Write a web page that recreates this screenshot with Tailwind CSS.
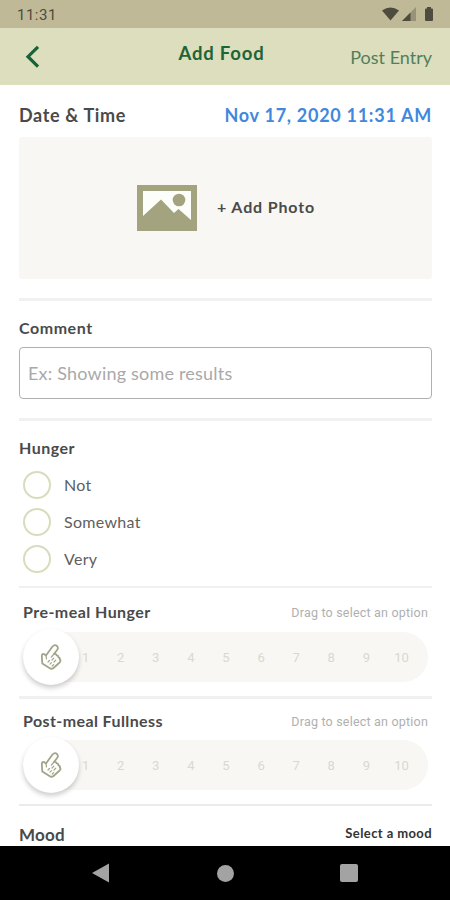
<!DOCTYPE html>
<html lang="en">
<head>
<meta charset="utf-8">
<meta name="viewport" content="width=device-width, initial-scale=1">
<title>Add Food</title>
<script src="https://cdn.jsdelivr.net/npm/@tailwindcss/browser@4"></script>
</head>
<body class="bg-white">
<svg class="hidden">
  <symbol id="hand" viewBox="0 0 24 28">
    <g fill="none" stroke="#a2a487" stroke-width="1.800" stroke-linejoin="round" stroke-linecap="round">
      <path d="M3.300 20.500 L2.800 13 Q3 10.500 5 11 L7 12.500 L13.500 3.500 Q15.800 1 18 3 Q19.600 4.800 18.300 6.800 L15 11 Q17 10.300 17.600 12.300 Q19.500 12.300 19.400 14.300 Q21.300 14.800 20.800 16.500 Q22.300 18 20.600 19.500 L14.500 25 Q12.500 26.500 10.500 25 Z"/>
      <path stroke-width="1.200" d="M7 12.500 L7.500 16 M15 11 L12.300 14.200 M9 19 L10.500 17.500 M13 17 L14.800 15.200 M11 21.200 L12.500 19.700 M15 19 L16.800 17.200 M13.200 23 L14.600 21.600"/>
    </g>
  </symbol>
</svg>
<div class="flex h-[900px] w-[450px] flex-col overflow-hidden bg-white font-['Lato',sans-serif] text-[#4a4a4a]">
  <div class="flex h-7 shrink-0 items-center justify-between bg-[#bfb997] pr-4 pl-[17px] text-[#4e4c3e]">
    <span class="pt-[2px] font-[Roboto,sans-serif] text-[15px] leading-5 tracking-[0.5px]">11:31</span>
    <svg class="mt-px h-4 w-[52px]" viewBox="0 0 52 16" fill="#4e4c3e">
      <path d="M0 3.500 Q8.500 -2.500 17 3.500 L8.500 13.500Z"/>
      <path d="M20 14 L34 0 V14Z" fill-opacity=".35"/><path d="M20 14 L28.500 5.500 V14Z"/>
      <path d="M45 0 h4 v1.500 h1 q1 0 1 1 V13 q0 1-1 1 h-6 q-1 0-1-1 V2.500 q0-1 1-1 h1Z"/>
    </svg>
  </div>
  <header class="grid h-[57px] shrink-0 grid-cols-3 bg-[#dcdebe] pr-[18px] pl-[25px] text-[#1d6437]">
    <svg class="mt-[17px] h-6 w-4" viewBox="0 0 16 24" fill="none" stroke="#176335" stroke-width="3.200"><path d="M13 1.800 L3 11.700 L13 21.700"/></svg>
    <h1 class="pt-[13px] pr-[14px] text-center text-[18.5px] leading-6 font-bold tracking-[0.800px] whitespace-nowrap">Add Food</h1>
    <span class="pt-[17px] text-right text-[18px] leading-6 whitespace-nowrap text-[#527f5b]">Post Entry</span>
  </header>
  <main class="flex h-[761px] shrink-0 flex-col overflow-hidden pr-[18px] pl-[19px]">
    <div class="flex h-[52px] shrink-0 items-center justify-between pt-2 text-[18px] leading-6 font-bold">
      <span class="tracking-[0.650px]">Date &amp; Time</span>
      <span class="tracking-[0.720px] text-[#3f88de]">Nov 17, 2020 11:31 AM</span>
    </div>
    <div class="flex h-[142px] shrink-0 items-center gap-5 rounded-[3px] bg-[#f8f7f3] pl-[118px]">
      <svg class="h-[46px] w-[60px]" viewBox="0 0 60 46"><path fill="#a3a47f" d="M0 0H60V46H0Z"/><path fill="#fdfdfa" d="M6 6H54V35L41.500 24L37 28L24 14.500L6 31Z"/><circle cx="42" cy="15" r="6.300" fill="#a3a47f"/></svg>
      <span class="-mt-0.5 text-[16px] leading-6 font-bold tracking-[0.850px]">+ Add Photo</span>
    </div>
    <div class="mt-[19px] h-[3px] shrink-0 bg-[#f1f1f1]"></div>
    <div class="mt-[15px] h-6 shrink-0 text-[16px] leading-6 font-bold tracking-[0.550px]">Comment</div>
    <div class="mt-[7px] flex h-[52px] shrink-0 items-center rounded-[4px] border-[1.5px] border-[#b0b0b0] pt-px pl-2 text-[18px] tracking-[0.200px] text-[#a9a9a9]">Ex: Showing some results</div>
    <div class="mt-[19px] h-[3px] shrink-0 bg-[#f1f1f1]"></div>
    <div class="mt-[15px] h-6 shrink-0 text-[16px] leading-6 font-bold tracking-[0.5px]">Hunger</div>
    <div class="mt-[11px] flex shrink-0 flex-col gap-[9px] pl-1 text-[16px] tracking-[0.3px] text-[#606060]">
      <div class="flex h-7 items-center gap-[13px]"><i class="size-7 rounded-full border-2 border-[#d9dcbc]"></i><span>Not</span></div>
      <div class="flex h-7 items-center gap-[13px]"><i class="size-7 rounded-full border-2 border-[#d9dcbc]"></i><span>Somewhat</span></div>
      <div class="flex h-7 items-center gap-[13px]"><i class="size-7 rounded-full border-2 border-[#d9dcbc]"></i><span>Very</span></div>
    </div>
    <div class="mt-[13px] h-[2px] shrink-0 bg-[#f0f0f0]"></div>

    <section class="flex h-[108px] shrink-0 flex-col pr-1 pl-[4px]">
      <div class="mt-[12px] flex h-6 items-center justify-between"><span class="text-[16px] font-bold tracking-[0.450px]">Pre-meal Hunger</span><span class="pt-[2px] font-[Roboto,sans-serif] text-[12.5px] tracking-[0.200px] text-[#b0b0b0]">Drag to select an option</span></div>
      <div class="mt-[8px] flex h-[50px] items-center rounded-full bg-[#f8f7f3] pr-[9px]">
        <div class="z-10 flex size-14 shrink-0 items-center justify-center rounded-full bg-white shadow-[0_3px_5px_rgba(0,0,0,0.2)]"><svg class="h-7 w-6"><use href="#hand"/></svg></div>
        <div class="-ml-[11px] grid grow grid-cols-10 pt-0.5 text-center font-[Roboto,sans-serif] text-[13px] text-[#d8d8d5]"><span>1</span><span>2</span><span>3</span><span>4</span><span>5</span><span>6</span><span>7</span><span>8</span><span>9</span><span>10</span></div>
      </div>
    </section>
    <div class="h-[3px] shrink-0 bg-[#f0f0f0]"></div>
    <section class="flex h-[105px] shrink-0 flex-col pr-1 pl-[4px]">
      <div class="mt-[10px] flex h-6 items-center justify-between"><span class="text-[16px] font-bold tracking-[0.400px]">Post-meal Fullness</span><span class="pt-[2px] font-[Roboto,sans-serif] text-[12.5px] tracking-[0.200px] text-[#b0b0b0]">Drag to select an option</span></div>
      <div class="mt-[7px] flex h-[50px] items-center rounded-full bg-[#f8f7f3] pr-[9px]">
        <div class="z-10 flex size-14 shrink-0 items-center justify-center rounded-full bg-white shadow-[0_3px_5px_rgba(0,0,0,0.2)]"><svg class="h-7 w-6"><use href="#hand"/></svg></div>
        <div class="-ml-[11px] grid grow grid-cols-10 pt-0.5 text-center font-[Roboto,sans-serif] text-[13px] text-[#d8d8d5]"><span>1</span><span>2</span><span>3</span><span>4</span><span>5</span><span>6</span><span>7</span><span>8</span><span>9</span><span>10</span></div>
      </div>
    </section>
    <div class="h-[2px] shrink-0 bg-[#ebebeb]"></div>
    <div class="mt-4 flex h-6 shrink-0 items-center justify-between font-bold"><span class="pt-px text-[17px] tracking-[0.200px]">Mood</span><span class="text-[13px] tracking-[0.4px] text-[#333]">Select a mood</span></div>
  </main>
  <nav class="flex h-[54px] shrink-0 items-center bg-black pl-[92px]">
    <svg class="h-5 w-[17px]" viewBox="0 0 17 20"><path fill="#a3a3a3" d="M0 10L17 0.500V19.500Z"/></svg>
    <i class="ml-[108px] size-[17px] rounded-full bg-[#a3a3a3]"></i>
    <i class="ml-[106px] size-[18px] rounded-[2px] bg-[#a3a3a3]"></i>
  </nav>
</div>
</body>
</html>
